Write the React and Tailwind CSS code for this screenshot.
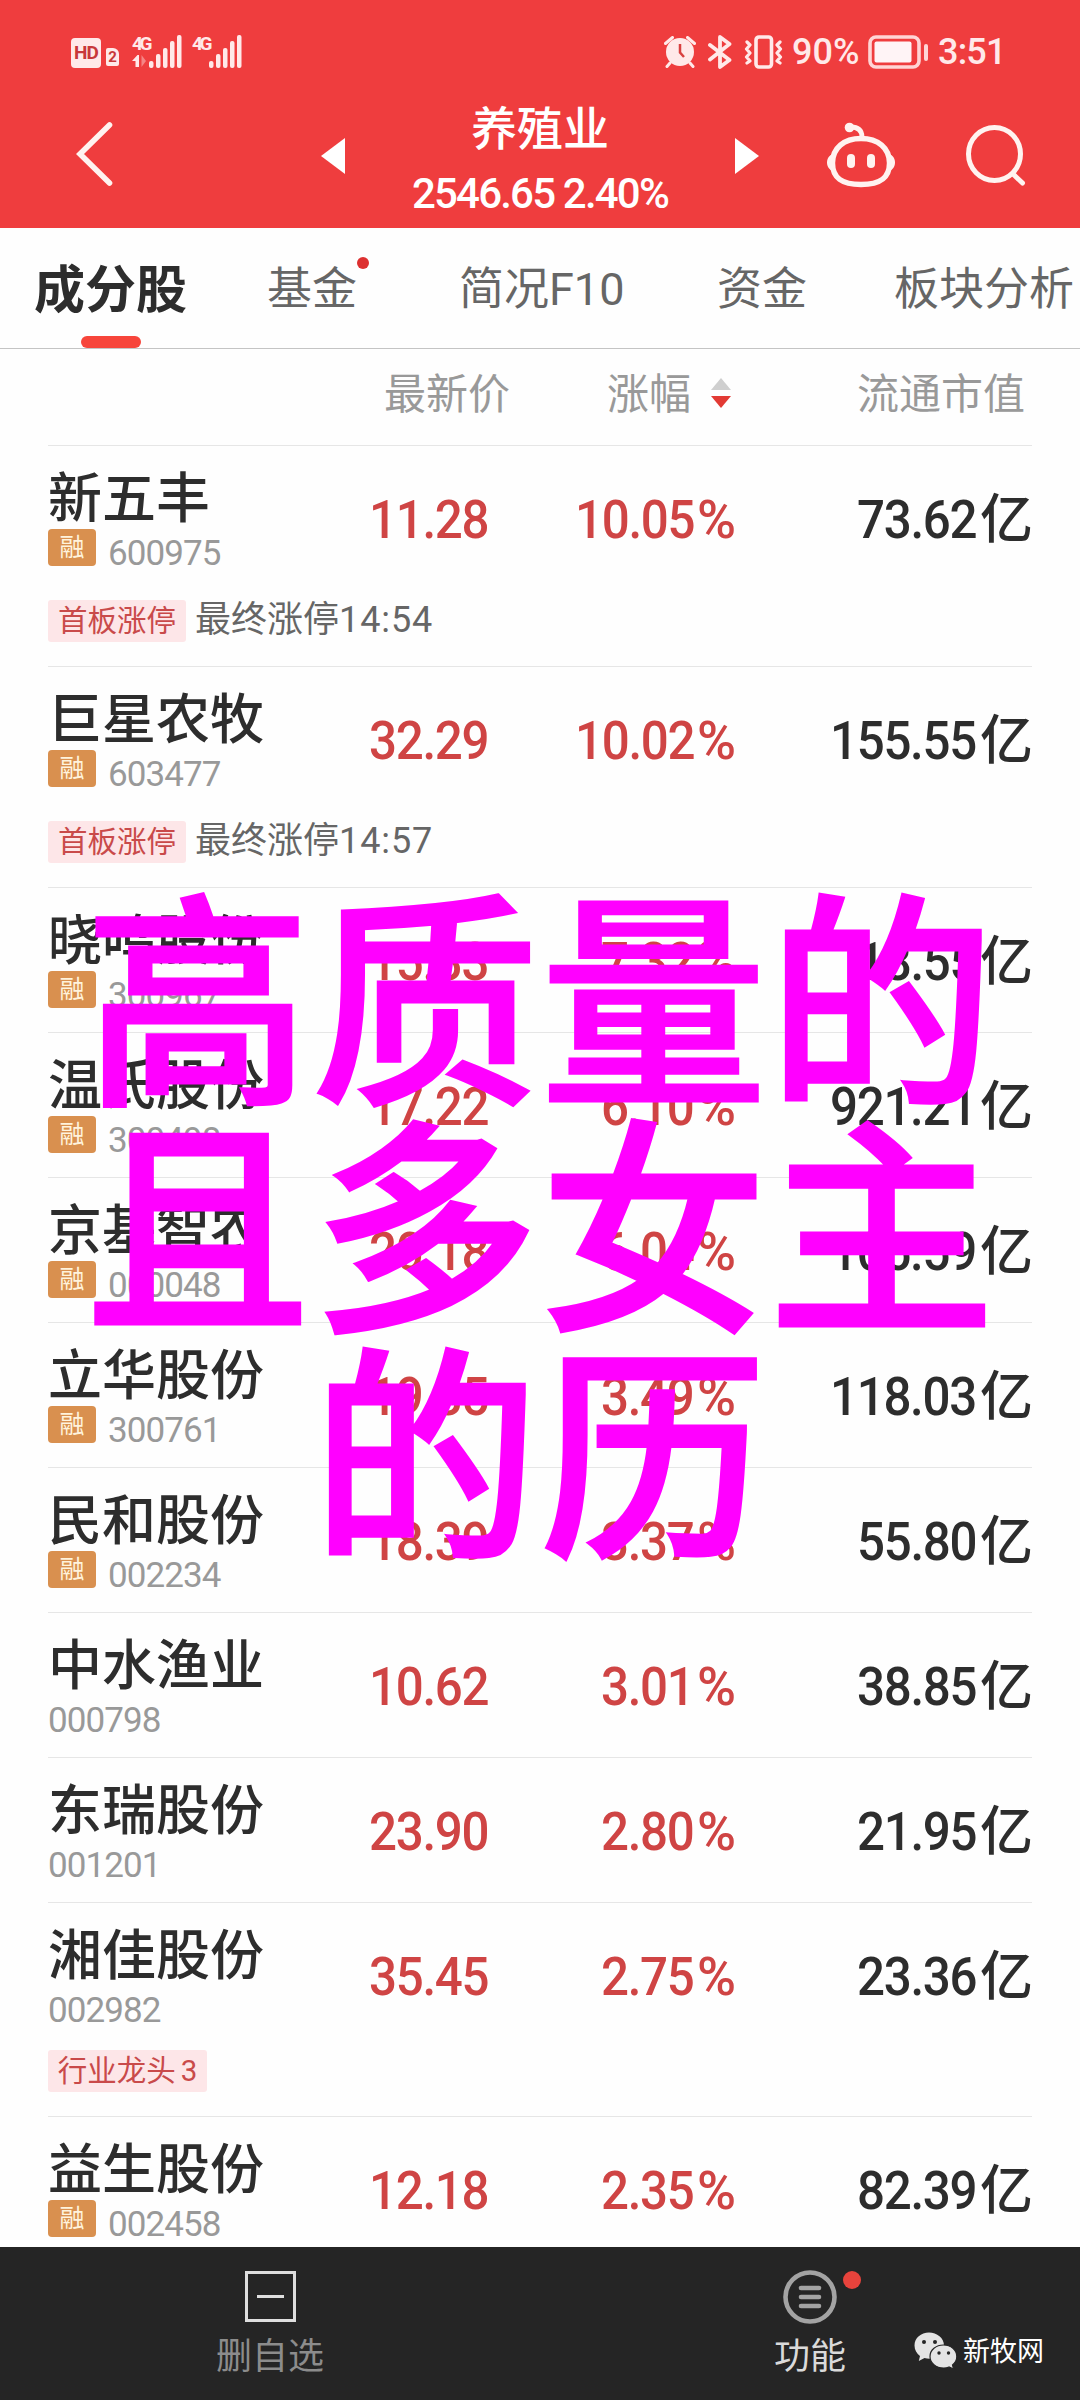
import React from "react";

const tabs = [
  { title: "成分股", active: true, box: "w-[233px]" },
  { title: "基金", dot: true, box: "w-[192px]" },
  { title: "简况F10", box: "w-[258px]" },
  { title: "资金", box: "w-[177px]" },
  { title: "板块分析", box: "w-[180px]" },
];

const stocks = [
  {
    name: "新五丰",
    code: "600975",
    margin: true,
    price: "11.28",
    change: "10.05",
    cap: "73.62",
    tag: "首板涨停",
    note: "最终涨停",
    time: "14:54",
  },
  {
    name: "巨星农牧",
    code: "603477",
    margin: true,
    price: "32.29",
    change: "10.02",
    cap: "155.55",
    tag: "首板涨停",
    note: "最终涨停",
    time: "14:57",
  },
  { name: "晓鸣股份", code: "300967", margin: true, price: "15.33", change: "7.32", cap: "18.55" },
  { name: "温氏股份", code: "300498", margin: true, price: "17.22", change: "6.10", cap: "921.21" },
  { name: "京基智农", code: "000048", margin: true, price: "20.18", change: "6.04", cap: "105.59" },
  { name: "立华股份", code: "300761", margin: true, price: "19.35", change: "3.49", cap: "118.03" },
  { name: "民和股份", code: "002234", margin: true, price: "18.39", change: "3.37", cap: "55.80" },
  { name: "中水渔业", code: "000798", price: "10.62", change: "3.01", cap: "38.85" },
  { name: "东瑞股份", code: "001201", price: "23.90", change: "2.80", cap: "21.95" },
  {
    name: "湘佳股份",
    code: "002982",
    price: "35.45",
    change: "2.75",
    cap: "23.36",
    tag: "行业龙头",
    rank: "3",
  },
  { name: "益生股份", code: "002458", margin: true, price: "12.18", change: "2.35", cap: "82.39" },
];

const Signal = () => (
  <svg width="34" height="34" viewBox="0 0 34 34" fill="#ffe9e9">
    <rect x="0" y="26" width="4.5" height="7" rx="2" />
    <rect x="7" y="19" width="4.5" height="14" rx="2" />
    <rect x="14" y="13" width="4.5" height="20" rx="2" />
    <rect x="21" y="6" width="4.5" height="27" rx="2" />
    <rect x="28" y="0" width="4.5" height="33" rx="2" />
  </svg>
);

const StatusBar = () => (
  <div className="flex items-center h-[104px] pl-[71px] pr-[74px] text-[#ffe9e9]">
    <div className="w-[30px] h-[30px] mt-[2px] rounded-[4px] bg-[#ffe9e9] text-[#c8383a] text-[19px] font-bold leading-[30px] text-center tracking-[-1px]">
      HD
    </div>
    <div className="w-[13px] h-[18px] ml-[5px] mt-[10px] rounded-[2px] rounded-tr-[6px] bg-[#ffe9e9] text-[#c8383a] text-[15px] font-bold leading-[18px] text-center">
      2
    </div>
    <div className="relative flex flex-col w-[17px] h-[34px] ml-[13px] text-[19px] font-bold leading-[17px] tracking-[-3.5px]">
      4G
      <svg width="17" height="14" viewBox="0 0 17 14" className="mt-[3px]">
        <path d="M0 6L5.500 0H7V12H3.500V6Z" fill="#ffe9e9" />
        <path d="M9.500 0V12L14 6" fill="#f58585" />
      </svg>
    </div>
    <Signal />
    <div className="w-[17px] h-[34px] ml-[9px] text-[19px] font-bold leading-[17px] tracking-[-3.5px]">4G</div>
    <Signal />
    <div className="flex items-center ml-auto">
      <svg width="32" height="32" viewBox="0 0 32 32" fill="none">
        <circle cx="16" cy="16" r="14" fill="#ffe9e9" />
        <path d="M1.500 7.500L8.500 1.500M23.500 1.500L30.500 7.500M6 27L3 30.500M26 27L29 30.500" stroke="#ffe9e9" strokeWidth="3" strokeLinecap="round" />
        <path d="M16 8V16.500L20 21" stroke="#d8403f" strokeWidth="2.500" />
      </svg>
      <svg width="24" height="34" viewBox="0 0 24 34" className="ml-[12px]" fill="none" stroke="#ffe9e9" strokeWidth="3.800" strokeLinejoin="round" strokeLinecap="round">
        <path d="M2 10L21.500 25L12 32V2L21.500 9L2 24.500" />
      </svg>
      <svg width="40" height="34" viewBox="0 0 40 34" className="ml-[12px]" fill="none" stroke="#ffe9e9" strokeLinejoin="round" strokeLinecap="round">
        <rect x="12" y="2" width="15.500" height="30" rx="3" strokeWidth="3.600" />
        <path d="M3 7L6 10L2.500 14L6 18L2.500 22L6 26L3 28M36 7L33 10L36.500 14L33 18L36.500 22L33 26L36 28" strokeWidth="3.200" />
      </svg>
      <span className="w-[71px] ml-[8px] text-[36px] font-medium leading-[36px]">90%</span>
      <svg width="62" height="34" viewBox="0 0 62 34" className="ml-[5px]">
        <rect x="2" y="2" width="49" height="30" rx="6" fill="none" stroke="#ffd5d5" strokeWidth="3.600" />
        <rect x="6.500" y="6.500" width="37" height="21" rx="2" fill="#fff4f6" />
        <rect x="56" y="9" width="4" height="17" rx="2" fill="#ffd5d5" />
      </svg>
      <span className="w-[68px] ml-[8px] text-[36px] font-medium leading-[36px] tracking-[-0.8px]">3:51</span>
    </div>
  </div>
);

const NavBar = () => (
  <div className="flex items-center h-[124px] pl-[76px] pb-[22px] text-white">
    <svg width="37" height="66" viewBox="0 0 37 66" className="-mt-[3px]" fill="none" stroke="#fff3f0" strokeWidth="5.600" strokeLinecap="round" strokeLinejoin="miter">
      <path d="M33.500 4L4 33L33.500 62" />
    </svg>
    <svg width="24" height="36" viewBox="0 0 24 36" className="ml-[208px] mt-[2px]">
      <path d="M0 18L24 0V36Z" fill="#fff" />
    </svg>
    <div className="flex flex-col items-center w-[390px] h-[124px] pt-[6px]">
      <div className="text-[46px] font-medium leading-[60px]">养殖业</div>
      <div className="mt-[14px] text-[42px] font-medium leading-[42px] tracking-[-1.8px] whitespace-pre">2546.65 2.40%</div>
    </div>
    <svg width="24" height="36" viewBox="0 0 24 36" className="mt-[2px]">
      <path d="M24 18L0 0V36Z" fill="#fff" />
    </svg>
    <svg width="70" height="66" viewBox="0 0 70 66" className="ml-[67px]" fill="none" stroke="#fff3f0" strokeWidth="5.400">
      <path d="M35 16.500C52 16.500 63.500 26 63.500 41C63.500 56 54 62.500 35 62.500C16 62.500 6.500 56 6.500 41C6.500 26 18 16.500 35 16.500Z" />
      <path d="M36 15C36 8 32 5 25 5" strokeWidth="4.800" />
      <circle cx="23.500" cy="5.500" r="4.800" fill="#fff3f0" stroke="none" />
      <path d="M7 32C-1 34 -1 47 7 49ZM63 32C71 34 71 47 63 49Z" fill="#fff3f0" stroke="none" />
      <rect x="21" y="32" width="8" height="14" rx="4" fill="#fff3f0" stroke="none" />
      <rect x="41" y="32" width="8" height="14" rx="4" fill="#fff3f0" stroke="none" />
    </svg>
    <svg width="60" height="62" viewBox="0 0 60 62" className="ml-[70px]" fill="none" stroke="#fff3f0" strokeWidth="5" strokeLinecap="round">
      <ellipse cx="28.500" cy="30" rx="26" ry="26.500" />
      <path d="M47 50L56.500 59" />
    </svg>
  </div>
);

const TabBar = () => (
  <div className="flex h-[121px] pl-[34px] border-b border-[#c4c4c4]">
    {tabs.map((tab) => (
      <div key={tab.title} className={`relative h-[120px] shrink-0 whitespace-nowrap ${tab.box}`}>
        {tab.active ? (
          <div className="text-[51px] font-bold leading-[125px] text-[#2d2d2d]">{tab.title}</div>
        ) : (
          <div className="text-[45px] leading-[124px] text-[#666]">{tab.title}</div>
        )}
        {tab.active && <div className="absolute left-[47px] bottom-0 w-[60px] h-[12px] rounded-full bg-[#f7453b]" />}
        {tab.dot && <div className="absolute left-[90px] top-[29px] w-[12px] h-[12px] rounded-full bg-[#dd3030]" />}
      </div>
    ))}
  </div>
);

const ListHeader = () => (
  <div className="flex items-center h-[96px] pl-[384px] pr-[55px] pb-[8px] text-[42px] leading-[60px] text-[#999]">
    <span className="w-[126px] pt-[4px]">最新价</span>
    <span className="w-[84px] ml-[97px] pt-[4px]">涨幅</span>
    <svg width="20" height="30" viewBox="0 0 20 30" className="ml-[20px]">
      <path d="M10 0L20 12H0Z" fill="#cfcfcf" />
      <path d="M10 30L20 18H0Z" fill="#e23a34" />
    </svg>
    <span className="ml-auto pt-[4px]">流通市值</span>
  </div>
);

// condensed figures, anchored on their right edge
const Figure = ({ children }) => (
  <span className="inline-block origin-right scale-x-93 tracking-[-1.400px]">{children}</span>
);

const StockRow = ({ stock }) => (
  <div className="mx-[48px] border-t border-[#e6e6e6]">
    <div className="grid grid-cols-[212px_228px_247px_298px] h-[144px] text-[53px] font-medium leading-[149px] text-right text-[#cf4444]">
      <div className="text-left whitespace-nowrap">
        <div className="h-[83px] text-[54px] leading-[107px] text-[#2d2d2d]">{stock.name}</div>
        <div className="flex h-[38px] font-normal">
          {stock.margin && (
            <div className="w-[48px] h-[37px] mr-[12px] rounded-[4px] bg-[#d9904f] text-[25px] leading-[37px] text-center text-[#fff3dc]">
              融
            </div>
          )}
          <div className="pt-[6px] text-[35px] leading-[38px] tracking-[-0.9px] text-[#999]">{stock.code}</div>
        </div>
      </div>
      <div>
        <Figure>{stock.price}</Figure>
      </div>
      <div className="flex justify-end gap-[3px] tracking-[-1px]">
        <Figure>{stock.change}</Figure>
        <span>%</span>
      </div>
      <div className="flex justify-end gap-[4px] text-[#2d2d2d]">
        <Figure>{stock.cap}</Figure>
        <span>亿</span>
      </div>
    </div>
    {stock.note && (
      <div className="flex h-[76px] pt-[10px]">
        <div className="w-[138px] h-[42px] rounded-[3px] bg-[#fde6e8] text-[29.500px] leading-[43px] text-center text-[#c94a4a]">
          {stock.tag}
        </div>
        <div className="ml-[9px] text-[36px] leading-[40px] text-[#666]">
          {stock.note}
          <span className="tracking-[0.9px]">{stock.time}</span>
        </div>
      </div>
    )}
    {stock.rank && (
      <div className="flex h-[69px] pt-[3px]">
        <div className="w-[159px] h-[42px] rounded-[3px] bg-[#fde6e8] text-[29.500px] leading-[43px] text-center text-[#c94a4a]">
          {stock.tag}
          <span className="ml-[5px]">{stock.rank}</span>
        </div>
      </div>
    )}
  </div>
);

const BottomBar = () => (
  <div className="relative flex h-[153px] bg-[#252525] shrink-0">
    <div className="flex flex-col items-center w-1/2 pt-[24px]">
      <svg width="51" height="51" viewBox="0 0 51 51" fill="none" stroke="#dedede" strokeWidth="3">
        <rect x="1.500" y="1.500" width="48" height="48" />
        <path d="M12 25.500H39" />
      </svg>
      <div className="mt-[9px] text-[36px] leading-[52px] text-[#8c8c8c]">删自选</div>
    </div>
    <div className="flex flex-col items-center w-1/2 pt-[23px]">
      <div className="relative">
        <svg width="54" height="54" viewBox="0 0 54 54" fill="none" stroke="#a3a3a3" strokeWidth="4.600">
          <circle cx="27" cy="27" r="24.500" />
          <path d="M18 18H36M18 27H36M18 36H36" strokeLinecap="round" />
        </svg>
        <div className="absolute left-[60px] top-[1px] w-[18px] h-[18px] rounded-full bg-[#e8433c]" />
      </div>
      <div className="mt-[7px] text-[36px] leading-[52px] text-[#dadada]">功能</div>
    </div>
    {/* account signature over the bar */}
    <div className="absolute left-[914px] top-[82px] flex items-center text-white">
      <svg width="43" height="38" viewBox="0 0 43 38">
        <path d="M15 1.500C7 1.500 0.500 7 0.500 14.500C0.500 19 2.800 22.500 6 25L4.800 30L10.500 27C12 27.500 14 27.700 15.500 27.700C23 27.700 30 22 30 14.500C30 7 23 1.500 15 1.500Z" fill="#e4e4e4" />
        <path d="M29.500 14C22 14 16 19 16 25.500C16 32 22 37 29.500 37C31.500 37 33.500 36.700 35 36L39.500 38L38.500 34C41 32 42.800 29 42.800 25.500C42.800 19 37 14 29.500 14Z" fill="#e4e4e4" stroke="#252525" strokeWidth="1.200" />
        <circle cx="10" cy="11" r="2" fill="#252525" />
        <circle cx="21" cy="11" r="2" fill="#252525" />
        <circle cx="25" cy="22" r="1.700" fill="#252525" />
        <circle cx="34.500" cy="22" r="1.700" fill="#252525" />
      </svg>
      <span className="ml-[6px] pt-[4px] text-[27px] leading-[38px]">新牧网</span>
    </div>
  </div>
);

const App = () => {
  return (
    <div className="relative flex flex-col w-[1080px] h-[2400px] overflow-hidden bg-[#fefefe] font-[Roboto,'Noto_Sans_CJK_SC',sans-serif]">
      <div className="h-[228px] shrink-0 bg-[#ef3d3e]">
        <StatusBar />
        <NavBar />
      </div>
      <TabBar />
      <ListHeader />
      <div className="flex-1 min-h-0 overflow-hidden">
        {stocks.map((stock) => (
          <StockRow key={stock.code} stock={stock} />
        ))}
      </div>
      <BottomBar />

      <div className="absolute left-0 top-[875px] w-full text-center text-[227px] leading-[227px] tracking-[1px] font-medium text-[#ff00ff] [-webkit-text-stroke:3px_#ff00ff] font-['Noto_Sans_CJK_SC',sans-serif]">
        <div>高质量的</div>
        <div>且多女主</div>
        <div>的历</div>
      </div>
    </div>
  );
};

export default App;
